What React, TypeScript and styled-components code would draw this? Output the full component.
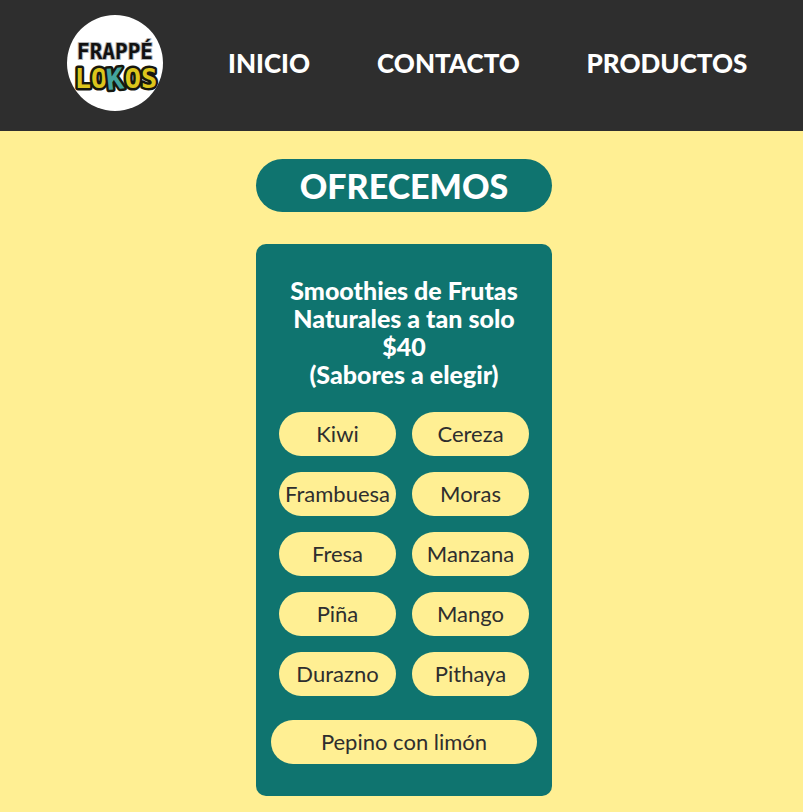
import React from "react";
import styled, { createGlobalStyle } from "styled-components";

const GlobalStyle = createGlobalStyle`
  *, *::before, *::after { box-sizing: border-box; }
  body {
    margin: 0;
    background: #ffef93;
    color: #2e2e2e;
    font-family: "Gill Sans MT", "Gill Sans", Lato, sans-serif;
  }
`;

const Header = styled.header`
  display: flex;
  justify-content: center;
  align-items: center;
  gap: 64px;
  padding: 15px 0 20px 12px;
  background: #2e2e2e;
`;

const LogoLink = styled.a`
  display: block;
  flex: none;
  width: 96px;
  height: 96px;
  border-radius: 50%;
  overflow: hidden;
  background: #fff;
`;

const Nav = styled.nav`
  display: grid;
  grid-template-columns: 84px 147px 162px;
  gap: 64px;
`;

const NavLink = styled.a`
  color: #fff;
  font-size: 26px;
  line-height: 28px;
  font-weight: 900;
  text-align: center;
  text-decoration: none;
`;

const Main = styled.main`
  display: flex;
  flex-direction: column;
  align-items: center;
  gap: 32px;
  padding: 28px 0 16px 5px;
`;

const Title = styled.h1`
  width: 296px;
  margin: 0;
  padding: 8px 0;
  border-radius: 32px;
  background: #0f746f;
  color: #fff;
  font-size: 34px;
  line-height: 37px;
  font-weight: 900;
  text-align: center;
`;

const Card = styled.section`
  width: 296px;
  padding: 32px 15px;
  border-radius: 10px;
  background: #0f746f;
`;

const CardTitle = styled.h2`
  margin: 0 0 24px;
  color: #fff;
  font-size: 25px;
  line-height: 28px;
  font-weight: 900;
  text-align: center;
`;

const Flavors = styled.ul`
  display: grid;
  grid-template-columns: 1fr 1fr;
  gap: 16px;
  margin: 0 0 24px;
  padding: 0 8px;
  list-style: none;
`;

const Pill = styled.li`
  padding: 8px 0;
  border-radius: 24px;
  background: #ffef93;
  font-size: 22px;
  line-height: 28px;
  text-align: center;
  white-space: nowrap;
`;

const flavors = [
  "Kiwi", "Cereza", "Frambuesa", "Moras", "Fresa",
  "Manzana", "Piña", "Mango", "Durazno", "Pithaya",
];

const links = ["Inicio", "Contacto", "Productos"];

const LogoText = styled.text`
  font-family: "DejaVu Sans Mono", monospace;
  font-weight: 700;
  text-anchor: middle;
  paint-order: stroke;
  stroke-linejoin: round;
`;

const Logo = () => (
  <svg width="96" height="96" viewBox="0 0 96 96" role="img" aria-label="Frappé Lokos">
    <LogoText x="48" y="44" fontSize="21" fill="#111" stroke="#b5b5b5" strokeWidth="2">FRAPPÉ</LogoText>
    <LogoText x="49" y="73" fontSize="27" fill="#dcc51c" stroke="#17170e" strokeWidth="5">
      LO<tspan dy="2" fontSize="29" fill="#43a49d" rotate="-6">K</tspan><tspan dy="-2">OS</tspan>
    </LogoText>
  </svg>
);

export default function App() {
  return (
    <>
      <GlobalStyle />
      <Header>
        <LogoLink href="#inicio"><Logo /></LogoLink>
        <Nav>
          {links.map((label) => (
            <NavLink key={label} href={`#${label.toLowerCase()}`}>{label.toUpperCase()}</NavLink>
          ))}
        </Nav>
      </Header>
      <Main>
        <Title>OFRECEMOS</Title>
        <Card>
          <CardTitle>
            Smoothies de Frutas<br />Naturales a tan solo<br />$40<br />(Sabores a elegir)
          </CardTitle>
          <Flavors>
            {flavors.map((name) => <Pill key={name}>{name}</Pill>)}
          </Flavors>
          <Pill as="div">Pepino con limón</Pill>
        </Card>
      </Main>
    </>
  );
}
